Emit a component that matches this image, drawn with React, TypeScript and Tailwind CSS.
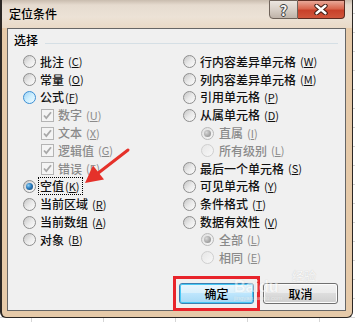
import React from 'react'

type RadioState = 'normal' | 'hover' | 'checked' | 'disChecked' | 'disabled'

interface Opt {
  t: string
  k: string
  radio?: RadioState
  check?: boolean
  sub?: boolean
  dim?: boolean
  tight?: boolean
  focus?: boolean
}

const left: Opt[] = [
  { t: '批注', k: 'C', radio: 'normal' },
  { t: '常量', k: 'O', radio: 'normal' },
  { t: '公式', k: 'F', radio: 'hover', tight: true },
  { t: '数字', k: 'U', check: true, sub: true, dim: true },
  { t: '文本', k: 'X', check: true, sub: true, dim: true },
  { t: '逻辑值', k: 'G', check: true, sub: true, dim: true },
  { t: '错误', k: 'E', check: true, sub: true, dim: true },
  { t: '空值', k: 'K', radio: 'checked', tight: true, focus: true },
  { t: '当前区域', k: 'R', radio: 'normal' },
  { t: '当前数组', k: 'A', radio: 'normal' },
  { t: '对象', k: 'B', radio: 'normal' },
]

const right: Opt[] = [
  { t: '行内容差异单元格', k: 'W', radio: 'normal' },
  { t: '列内容差异单元格', k: 'M', radio: 'normal' },
  { t: '引用单元格', k: 'P', radio: 'normal' },
  { t: '从属单元格', k: 'D', radio: 'normal' },
  { t: '直属', k: 'I', radio: 'disChecked', sub: true, dim: true },
  { t: '所有级别', k: 'L', radio: 'disabled', sub: true, dim: true },
  { t: '最后一个单元格', k: 'S', radio: 'normal' },
  { t: '可见单元格', k: 'Y', radio: 'normal' },
  { t: '条件格式', k: 'T', radio: 'normal' },
  { t: '数据有效性', k: 'V', radio: 'normal' },
  { t: '全部', k: 'L', radio: 'disChecked', sub: true, dim: true },
  { t: '相同', k: 'E', radio: 'disabled', sub: true, dim: true },
]

function Radio({ state }: { state: RadioState }) {
  const ring = {
    normal: 'border-[#8e8e8e] bg-[linear-gradient(135deg,#c4c4c4_0%,#e9e9e9_50%,#fcfcfc_100%)]',
    hover: 'border-[#3b8fd4] bg-[linear-gradient(135deg,#9fd3f4_0%,#cdeefe_50%,#f0fbff_100%)]',
    checked: 'border-[#8e8e8e] bg-[linear-gradient(135deg,#c4c4c4_0%,#e9e9e9_50%,#fcfcfc_100%)]',
    disChecked: 'border-[#b9b9b9] bg-[linear-gradient(135deg,#e0e0e0_0%,#f6f6f6_100%)]',
    disabled: 'border-[#cfcfcf] bg-[linear-gradient(135deg,#e6e6e6_0%,#f8f8f8_100%)]',
  }[state]
  return (
    <span className={`w-[13px] h-[13px] shrink-0 rounded-full border flex items-center justify-center ${ring}`}>
      {state === 'checked' && (
        <span className="w-[7px] h-[7px] rounded-full bg-[radial-gradient(circle_at_35%_35%,#8fd0f5_0%,#2a7bbd_45%,#143f66_100%)]" />
      )}
      {state === 'disChecked' && (
        <span className="w-[7px] h-[7px] rounded-full bg-[radial-gradient(circle_at_35%_35%,#d8d8d8_0%,#a4a4a4_60%,#8c8c8c_100%)]" />
      )}
    </span>
  )
}

function CheckBox() {
  return (
    <span className="w-[13px] h-[13px] shrink-0 border border-[#b4b4b4] bg-[#f4f4f4] flex items-center justify-center">
      <svg width="11" height="11" viewBox="0 0 11 11">
        <path d="M2 5.5 L4.3 8 L9 2.2" fill="none" stroke="#a8a8a8" strokeWidth="1.8" />
      </svg>
    </span>
  )
}

function Row({ o }: { o: Opt }) {
  return (
    <div className={`h-[17.8px] flex items-center gap-[4px] ${o.sub ? 'pl-[18px]' : ''}`}>
      {o.check ? <CheckBox /> : <Radio state={o.radio ?? 'normal'} />}
      <span
        className={`flex items-center leading-none whitespace-nowrap font-medium ${o.dim ? 'text-[#8a8a8a]' : 'text-[#111]'} ${o.sub && !o.check ? 'ml-[1px]' : ''} ${o.focus ? 'outline-1 outline-dotted outline-black outline-offset-[1px] py-[1px] pr-[1px]' : ''}`}
      >
        {o.t}
        <span className={`text-[11px] font-normal ${o.tight ? 'ml-[1px]' : 'ml-[4px]'}`}>
          (<span className="underline underline-offset-1">{o.k}</span>)
        </span>
      </span>
    </div>
  )
}

function Button({ label, primary }: { label: string; primary?: boolean }) {
  return (
    <div
      className={`w-[75px] h-[21px] rounded-[3px] border flex items-center justify-center text-[12px] font-medium text-black ${
        primary
          ? 'border-[#3c7fb1] bg-[linear-gradient(to_bottom,#eaf6fd_0%,#d9f0fc_45%,#bee6fd_50%,#a7d9f5_100%)] shadow-[inset_0_0_0_1px_#48c8f5]'
          : 'border-[#707070] bg-[linear-gradient(to_bottom,#f2f2f2_0%,#ebebeb_45%,#dddddd_50%,#cfcfcf_100%)] shadow-[inset_0_0_0_1px_#fcfcfc]'
      }`}
    >
      {label}
    </div>
  )
}

export default function App() {
  return (
    <div className="w-[355px] h-[322px] overflow-hidden relative bg-white bg-[linear-gradient(to_right,#d6d6d6_1px,transparent_1px),linear-gradient(to_bottom,#d6d6d6_1px,transparent_1px)] bg-[size:72px_19px] bg-[position:31px_13px] [font-family:'Noto_Sans_CJK_SC','Noto_Sans',sans-serif] text-[12px]">
      {/* window */}
      <div className="w-[353px] h-[318px] flex flex-col border-l-2 border-r border-b border-[#2b2724] rounded-b-[6px] bg-[#e6caa9]">
        {/* title bar */}
        <div className="h-[28px] shrink-0 flex items-start bg-[linear-gradient(to_bottom,#c9bcae_0%,#e6dbcf_18%,#ece2d6_60%,#e9d9c6_100%)]">
          <span className="ml-[7px] mt-[8px] text-[12px] font-medium leading-none text-black">定位条件</span>
          <div className="ml-auto mr-[7px] flex h-[19px]">
            <div className="w-[29px] h-full border border-[#6f635a] rounded-bl-[4px] bg-[linear-gradient(to_bottom,#ece6e0_0%,#d8cfc6_50%,#bfb3a8_100%)] flex items-center justify-center">
              <span className="text-[14px] font-bold leading-none text-[#f4f4f4] [text-shadow:0_0_1px_#333,1px_0_0_#444,-1px_0_0_#444,0_1px_0_#444,0_-1px_0_#444]">?</span>
            </div>
            <div className="w-[47px] h-full border border-l-0 border-[#5b2a20] rounded-br-[4px] bg-[linear-gradient(to_bottom,#e9a898_0%,#d9664e_45%,#c8412a_55%,#d0563c_100%)] flex items-center justify-center">
              <svg width="14" height="11" viewBox="0 0 14 11">
                <path d="M2.5 1.8 L11.5 9.2 M11.5 1.8 L2.5 9.2" stroke="#3d1a12" strokeWidth="4.4" strokeLinecap="round" />
                <path d="M2.5 1.8 L11.5 9.2 M11.5 1.8 L2.5 9.2" stroke="#ffffff" strokeWidth="2.4" strokeLinecap="round" />
              </svg>
            </div>
          </div>
        </div>

        {/* client area */}
        <div className="ml-[5px] mr-[6px] mb-[6px] flex-1 border border-[#666] bg-[#f0f0f0] flex flex-col">
          <div className="mt-[2px] h-[18px] flex items-center pl-[6px] pr-[7px]">
            <span className="leading-none font-medium">选择</span>
            <span className="ml-[7px] flex-1 h-px bg-[#d5dfe5] mt-[6px]" />
          </div>

          <div className="mt-[4px] flex pl-[15px]">
            <div className="w-[160px] flex flex-col">
              {left.map((o, i) => (
                <Row key={i} o={o} />
              ))}
            </div>
            <div className="flex flex-col">
              {right.map((o, i) => (
                <Row key={i} o={o} />
              ))}
            </div>
          </div>

          <div className="mt-auto mb-[6px] pr-[7px] flex justify-end gap-[9px]">
            <div className="relative">
              <Button label="确定" primary />
              <div className="absolute -inset-x-[6px] -inset-y-[7px] border-[3px] border-[#e8242b]" />
            </div>
            <Button label="取消" />
          </div>
        </div>
      </div>

      {/* annotation arrow */}
      <svg className="absolute left-0 top-0 pointer-events-none" width="355" height="322">
        <line x1="128" y1="150" x2="97" y2="174" stroke="#e5312a" strokeWidth="3" strokeLinecap="round" />
        <polygon points="85,183 93,165.5 104,179.5" fill="#e5312a" />
      </svg>

      {/* watermark */}
      <div className="absolute left-[234px] top-[279px] pointer-events-none flex flex-col items-start opacity-50">
        <span className="text-[16px] font-bold leading-none text-white [text-shadow:0_0_1px_#b0b0b0] [font-family:'Liberation_Sans',sans-serif]">Baidu</span>
        <span className="text-[6px] leading-none text-white [text-shadow:0_0_1px_#b0b0b0] [font-family:'Liberation_Sans',sans-serif]">jingyan.baidu.com</span>
      </div>
      <span className="absolute left-[292px] top-[270px] pointer-events-none text-[12px] leading-none text-white opacity-60 [text-shadow:0_0_1px_#a0a0a0]">经验</span>
    </div>
  )
}
